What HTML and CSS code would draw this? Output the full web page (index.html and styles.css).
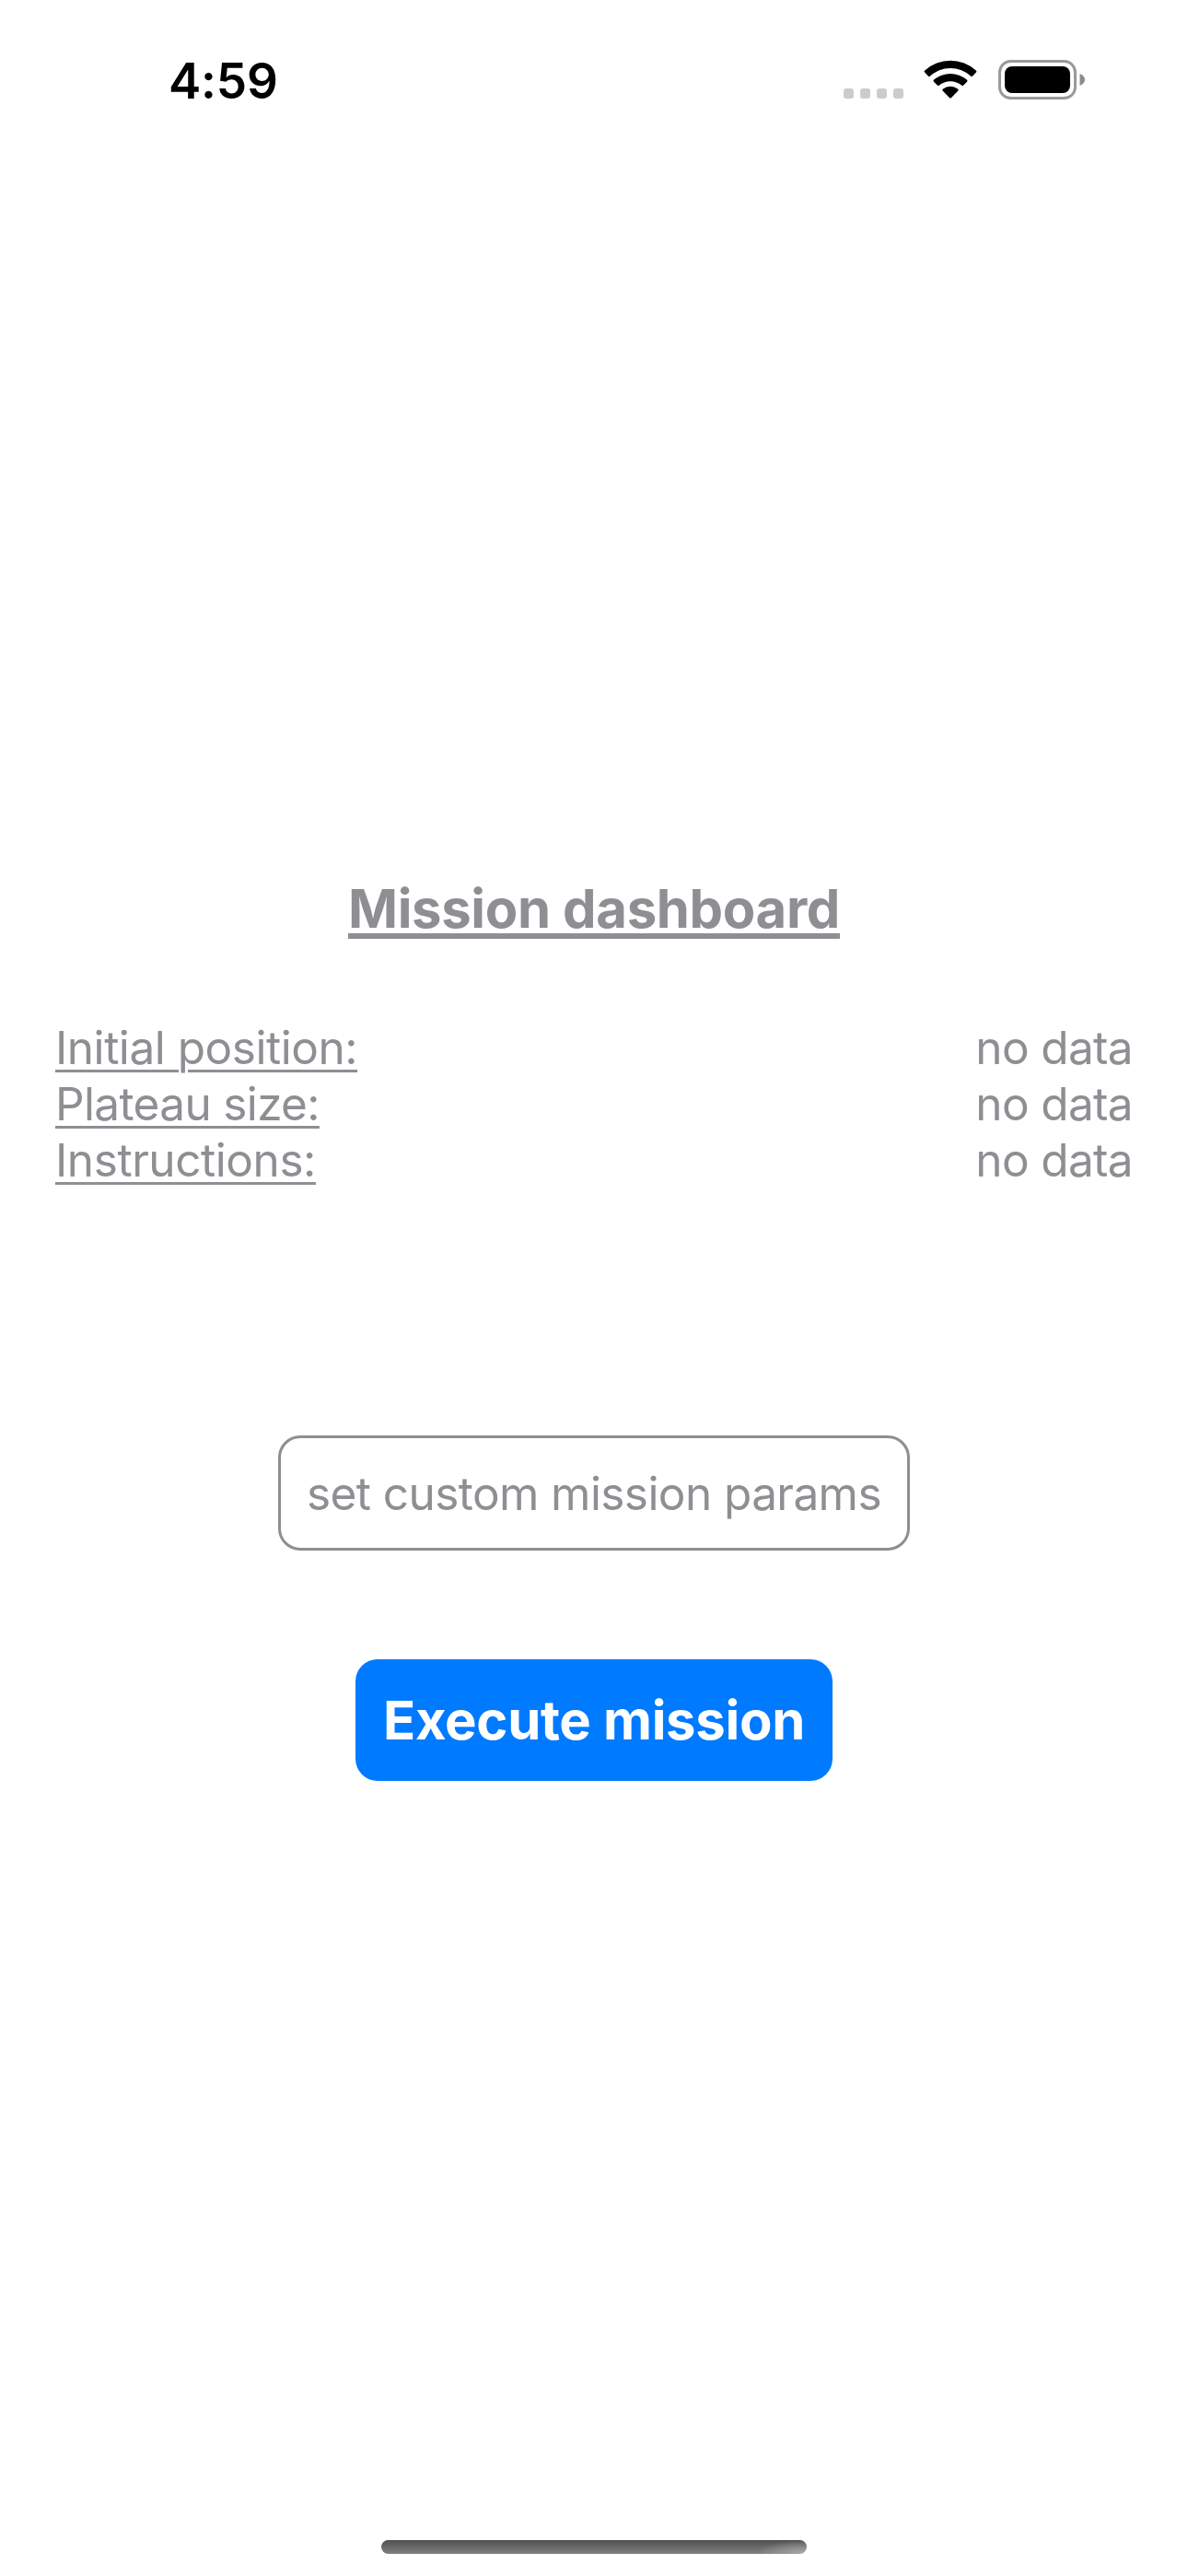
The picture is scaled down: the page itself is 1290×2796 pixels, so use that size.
FILE: index.html
```html
<!DOCTYPE html>
<html lang="en">
<head>
<meta charset="utf-8">
<title>Mission dashboard</title>
<link rel="stylesheet" href="styles.css">
</head>
<body>
<div class="screen">
  <header class="status-bar">
    <span class="time">4:59</span>
    <div class="status-icons">
      <svg class="cellular" width="65" height="11" viewBox="0 0 65 11" fill="#ccc"><rect width="11" height="11" rx="3"/><rect x="18" width="11" height="11" rx="3"/><rect x="36" width="11" height="11" rx="3"/><rect x="54" width="11" height="11" rx="3"/></svg>
      <svg class="wifi" width="58" height="43" viewBox="0 0 58 43"><path d="M1.1 13.6Q0 12.5 1.2 11.5A41 41 0 0 1 56.8 11.5Q58 12.5 56.9 13.6L53 17.7Q52.2 18.5 51.3 17.7A33 33 0 0 0 6.7 17.7Q5.8 18.5 5 17.7ZM11 23.7Q10 22.6 11.2 21.6A27 27 0 0 1 46.8 21.6Q48 22.6 47 23.7L43 27.7Q42.2 28.4 41.3 27.7A19 19 0 0 0 16.7 27.7Q15.8 28.4 15 27.7ZM20.8 33.7Q19.8 32.5 21 31.6A13 13 0 0 1 37 31.6Q38.2 32.5 37.2 33.7L29.8 41.2Q29 42 28.2 41.2Z"/></svg>
      <svg class="battery" width="94" height="43" viewBox="0 0 94 43"><rect x="1.5" y="1.5" width="82" height="40" rx="12" fill="none" stroke="#999" stroke-width="3"/><rect x="7" y="7" width="71" height="29" rx="8"/><path d="M88.5 15Q94 17.5 94 21.5T88.5 28Z" fill="#8b8b8b"/></svg>
    </div>
  </header>
  <main class="dashboard">
    <h1 class="title">Mission dashboard</h1>
    <dl class="params">
      <div class="param"><dt class="position">Initial position:</dt><dd>no data</dd></div>
      <div class="param"><dt class="plateau">Plateau size:</dt><dd>no data</dd></div>
      <div class="param"><dt class="instructions">Instructions:</dt><dd>no data</dd></div>
    </dl>
    <button class="button custom">set custom mission params</button>
    <button class="button execute">Execute mission</button>
  </main>
  <footer class="home-area"><div class="home-indicator"></div></footer>
</div>
</body>
</html>
```

FILE: styles.css
```css
* { box-sizing: border-box; }
body { margin: 0; background: #fff; font-family: Inter, "Liberation Sans", sans-serif; }
.screen { display: flex; flex-direction: column; width: 1290px; height: 2796px; }
.status-bar { display: flex; justify-content: space-between; height: 177px; padding: 52px 112px 0 183px; }
.time { font-size: 53px; line-height: 72px; font-weight: 600; letter-spacing: -0.2px; color: #000; }
.status-icons { display: flex; align-items: flex-start; padding-top: 13px; }
.cellular { margin: 31px 22px 0 0; }
.wifi { margin-right: 23px; }
.dashboard { flex: 1; display: flex; flex-direction: column; align-items: center; padding: 773px 60px 0; color: #8e8e93; }
.title { margin: 0; font-size: 58px; line-height: 72px; font-weight: 700; letter-spacing: -0.34px; text-decoration: underline; text-decoration-thickness: 6px; text-underline-offset: 6px; }
.params { align-self: stretch; margin: 85px 0 0; font-size: 49.5px; line-height: 61px; }
.param { display: flex; justify-content: space-between; }
dt { text-decoration: underline; text-decoration-thickness: 3px; text-underline-offset: 6px; }
.position { letter-spacing: -0.465px; }
.plateau { letter-spacing: -0.64px; }
.instructions { letter-spacing: -0.43px; }
dd { margin: 0; letter-spacing: -0.65px; }
.button { display: flex; align-items: center; justify-content: center; padding: 0; font-family: inherit; border-radius: 24px; white-space: nowrap; }
.custom { width: 686px; height: 125px; margin-top: 268px; border: 3px solid #8e8e93; background: #fff; color: #8e8e93; font-size: 49.5px; letter-spacing: -0.58px; }
.execute { width: 518px; height: 132px; margin-top: 118px; border: 0; background: #007aff; color: #fff; font-size: 58px; font-weight: 700; letter-spacing: -0.3px; }
.home-area { display: flex; justify-content: center; height: 39px; }
.home-indicator { width: 462px; height: 15px; border-radius: 8px; background: radial-gradient(ellipse 55px 15px at 100% 100%, #aaa, #aaa0), linear-gradient(#505050, #808080); }
```
